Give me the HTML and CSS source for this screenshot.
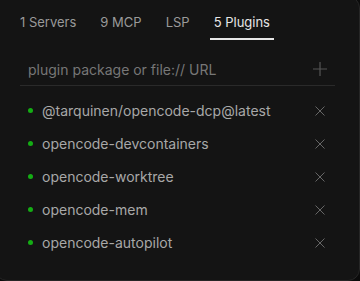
FILE: index.html
```html
<!DOCTYPE html>
<html lang="en">
<head>
    <meta charset="UTF-8">
    <meta name="viewport" content="width=device-width, initial-scale=1.0">
    <title>Plugins</title>
    <link rel="stylesheet" href="styles.css">
</head>
<body>
    <div class="panel">
        <div class="tabs">
            <div class="tab">1 Servers</div>
            <div class="tab">9 MCP</div>
            <div class="tab">LSP</div>
            <div class="tab active">5 Plugins</div>
        </div>
        <div class="add-row">
            <input type="text" class="add-input" placeholder="plugin package or file:// URL">
            <button class="icon-btn add-btn" title="Add">
                <svg width="14" height="14" viewBox="0 0 14 14"><path d="M7 0V14M0 7H14" stroke="currentColor" stroke-width="1.2" fill="none"/></svg>
            </button>
        </div>
        <ul class="plugins">
            <li class="plugin">
                <span class="dot"></span>
                <span class="name">@tarquinen/opencode-dcp@latest</span>
                <button class="icon-btn remove"><svg width="10" height="10" viewBox="0 0 10 10"><path d="M0.5 0.5L9.5 9.5M9.5 0.5L0.5 9.5" stroke="currentColor" stroke-width="1" fill="none"/></svg></button>
            </li>
            <li class="plugin">
                <span class="dot"></span>
                <span class="name">opencode-devcontainers</span>
                <button class="icon-btn remove"><svg width="10" height="10" viewBox="0 0 10 10"><path d="M0.5 0.5L9.5 9.5M9.5 0.5L0.5 9.5" stroke="currentColor" stroke-width="1" fill="none"/></svg></button>
            </li>
            <li class="plugin">
                <span class="dot"></span>
                <span class="name">opencode-worktree</span>
                <button class="icon-btn remove"><svg width="10" height="10" viewBox="0 0 10 10"><path d="M0.5 0.5L9.5 9.5M9.5 0.5L0.5 9.5" stroke="currentColor" stroke-width="1" fill="none"/></svg></button>
            </li>
            <li class="plugin">
                <span class="dot"></span>
                <span class="name">opencode-mem</span>
                <button class="icon-btn remove"><svg width="10" height="10" viewBox="0 0 10 10"><path d="M0.5 0.5L9.5 9.5M9.5 0.5L0.5 9.5" stroke="currentColor" stroke-width="1" fill="none"/></svg></button>
            </li>
            <li class="plugin">
                <span class="dot"></span>
                <span class="name">opencode-autopilot</span>
                <button class="icon-btn remove"><svg width="10" height="10" viewBox="0 0 10 10"><path d="M0.5 0.5L9.5 9.5M9.5 0.5L0.5 9.5" stroke="currentColor" stroke-width="1" fill="none"/></svg></button>
            </li>
        </ul>
    </div>
</body>
</html>
```

FILE: styles.css
```css
body {
    font-family: Inter, "Noto Sans", sans-serif;
    background-color: #0b0b0b;
    margin: 0;
    padding: 0;
    overflow: hidden;
}
.panel {
    width: 365px;
    height: 285px;
    margin: -4px 0 0 -5px;
    box-sizing: border-box;
    background-color: #141414;
    border: 1px solid #262626;
    border-radius: 12px;
    padding: 15px 24px 0 24px;
}
.tabs {
    display: flex;
    gap: 16px;
}
.tab {
    font-size: 13px;
    color: #9a9a9a;
    padding: 0 4px;
    height: 28px;
    line-height: 20px;
    box-sizing: border-box;
}
.tab:first-child {
    padding-left: 0;
}
.tab.active {
    color: #e6e6e6;
    border-bottom: 2px solid #e6e6e6;
}
.add-row {
    display: flex;
    align-items: center;
    margin-top: 18px;
    height: 22px;
    border-bottom: 1px solid #2a2a2a;
    padding: 0 8px 5px 8px;
}
.add-input {
    flex: 1;
    background: none;
    border: none;
    outline: none;
    font-family: inherit;
    font-size: 14px;
    color: #ddd;
    padding: 0;
}
.add-input::placeholder {
    color: #777;
}
.icon-btn {
    background: none;
    border: none;
    padding: 0;
    cursor: pointer;
    display: flex;
}
.add-btn {
    color: #555;
}
.plugins {
    list-style: none;
    margin: 8px 0 0 0;
    padding: 0;
}
.plugin {
    display: flex;
    align-items: center;
    height: 33px;
    padding: 0 10px 0 8px;
}
.dot {
    width: 5px;
    height: 5px;
    border-radius: 50%;
    background-color: #14ad14;
    margin-right: 9px;
}
.name {
    flex: 1;
    font-size: 14px;
    color: #a8a8a8;
}
.remove {
    color: #666;
}
```
